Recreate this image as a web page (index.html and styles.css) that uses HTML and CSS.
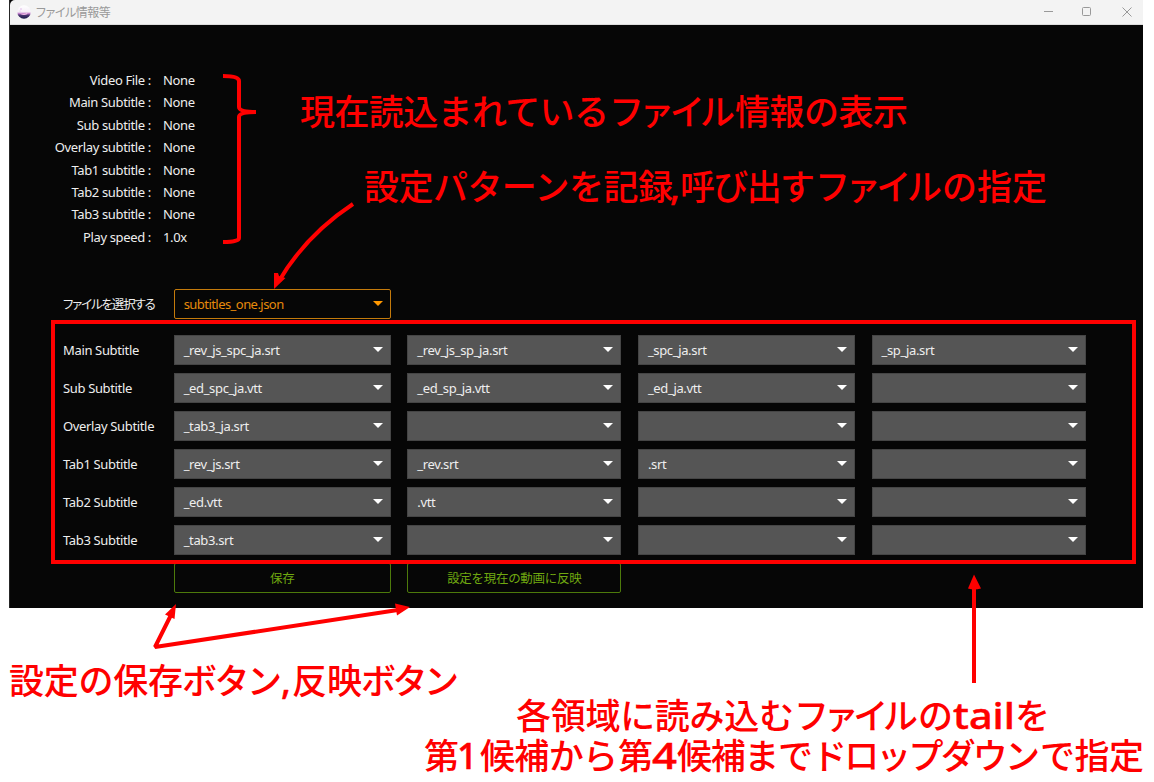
FILE: index.html
```
<!DOCTYPE html>
<html lang="ja">
<head>
<meta charset="utf-8">
<title>ファイル情報等</title>
<link rel="stylesheet" href="styles.css">
</head>
<body>
<main class="window">
  <header class="titlebar">
    <svg class="app-icon" width="14" height="14" viewBox="0 0 14 14">
      <defs><linearGradient id="sky" x1="0" y1="0" x2="0" y2="1"><stop offset="0" stop-color="#fff"/><stop offset=".5" stop-color="#f6eff8"/><stop offset=".62" stop-color="#bd78c8"/><stop offset=".74" stop-color="#48346f"/><stop offset="1" stop-color="#171947"/></linearGradient></defs>
      <circle cx="7" cy="7" r="6.7" fill="url(#sky)"/>
      <path d="M3.3 8.2Q7 9.5 10.800 7.500L10 9.300Q7 10.500 4 9.300Z" fill="#f0bde5"/>
      <circle cx="4" cy="4" r=".7" fill="#dba9e6"/><circle cx="3" cy="6" r=".5" fill="#dba9e6"/>
    </svg>
    <span class="title">ファイル情報等</span>
    <svg class="controls" width="90" height="12" viewBox="0 0 90 12" fill="none" stroke="#999">
      <path d="M1 5.500h9"/><rect x="39.500" y="1.500" width="8" height="8" rx="1"/><path d="M79.500 1.500l9 9m0-9l-9 9"/>
    </svg>
  </header>
  <dl class="info">
    <dt>Video File :</dt><dd>None</dd>
    <dt>Main Subtitle :</dt><dd>None</dd>
    <dt>Sub subtitle :</dt><dd>None</dd>
    <dt>Overlay subtitle :</dt><dd>None</dd>
    <dt>Tab1 subtitle :</dt><dd>None</dd>
    <dt>Tab2 subtitle :</dt><dd>None</dd>
    <dt>Tab3 subtitle :</dt><dd>None</dd>
    <dt>Play speed :</dt><dd>1.0x</dd>
  </dl>
  <section class="picker">
    <span class="jp">ファイルを選択する</span><div class="select file">subtitles_one.json</div>
  </section>
  <section class="form">
    <span>Main Subtitle</span><div class="select">_rev_js_spc_ja.srt</div><div class="select">_rev_js_sp_ja.srt</div><div class="select">_spc_ja.srt</div><div class="select">_sp_ja.srt</div>
    <span>Sub Subtitle</span><div class="select">_ed_spc_ja.vtt</div><div class="select">_ed_sp_ja.vtt</div><div class="select">_ed_ja.vtt</div><div class="select"></div>
    <span>Overlay Subtitle</span><div class="select">_tab3_ja.srt</div><div class="select"></div><div class="select"></div><div class="select"></div>
    <span>Tab1 Subtitle</span><div class="select">_rev_js.srt</div><div class="select">_rev.srt</div><div class="select">.srt</div><div class="select"></div>
    <span>Tab2 Subtitle</span><div class="select">_ed.vtt</div><div class="select">.vtt</div><div class="select"></div><div class="select"></div>
    <span>Tab3 Subtitle</span><div class="select">_tab3.srt</div><div class="select"></div><div class="select"></div><div class="select"></div>
    <span></span><button>保存</button><button>設定を現在の動画に反映</button>
  </section>
</main>
<svg class="notes" width="1154" height="782" viewBox="0 0 1154 782">
  <g fill="none" stroke="#f00" stroke-width="4">
    <rect x="53" y="322" width="1081" height="240"/>
    <path d="M223 76Q239 76 239 81V107Q239 112 256 112Q239 112 239 117V238Q239 242 223 242"/>
    <path d="M353 204Q306 235 279 281"/>
    <path d="M172 613L155 647L401 609.500" stroke-linejoin="bevel"/>
    <path d="M974 683V587"/>
  </g>
  <g fill="#f00">
    <path d="M274 289V273H278L279 276L285.500 278Z"/>
    <path d="M176 604L165 614.500L174.500 619Z"/>
    <path d="M410 607L395 603.500L397 615.500Z"/>
    <path d="M974 574.500L968 588.500Q974 590.500 981 588.500Z"/>
  </g>
  <g class="captions">
    <text y="125"><tspan x="300" textLength="309">現在読込まれている</tspan><tspan x="609" textLength="126">ファイル</tspan><tspan x="735" textLength="173">情報の表示</tspan></text>
    <text y="200"><tspan x="364" textLength="309">設定パターンを記録</tspan><tspan x="670" class="latin">,</tspan><tspan x="680" textLength="135">呼び出す</tspan><tspan x="815" textLength="127">ファイル</tspan><tspan x="942" textLength="105">の指定</tspan></text>
    <text y="694"><tspan x="9" textLength="174">設定の保存</tspan><tspan x="182" textLength="100">ボタン</tspan><tspan x="281" class="latin">,</tspan><tspan x="292" textLength="70">反映</tspan><tspan x="361" textLength="98">ボタン</tspan></text>
    <text y="729"><tspan x="516" textLength="278">各領域に読み込む</tspan><tspan x="794" textLength="124">ファイル</tspan><tspan x="918">の</tspan><tspan x="953" class="latin" textLength="62" lengthAdjust="spacingAndGlyphs">tail</tspan><tspan x="1015">を</tspan></text>
    <text y="769"><tspan x="424">第</tspan><tspan x="457" class="latin">1</tspan><tspan x="480" textLength="138">候補から</tspan><tspan x="618">第</tspan><tspan x="652" class="latin" textLength="25" lengthAdjust="spacingAndGlyphs">4</tspan><tspan x="677" textLength="136">候補まで</tspan><tspan x="812" textLength="228">ドロップダウン</tspan><tspan x="1040" textLength="104">で指定</tspan></text>
  </g>
</svg>
</body>
</html>
```
FILE: styles.css
```
* { box-sizing: border-box; }
body { margin: 0; width: 1154px; height: 782px; overflow: hidden; background: #fff; font: 13px/22px "Noto Sans", "Noto Sans CJK JP", sans-serif; letter-spacing: -.35px; color: #eee; }
.window { width: 1134px; height: 608px; margin-left: 9px; background: #060606; border-left: 1px solid #262626; }
.titlebar { height: 25px; display: flex; align-items: center; padding: 0 10px 1px 7px; background: #f3f3f3; border-bottom: 1px solid #ddd; border-top-left-radius: 5px; color: #999; }
.title { margin-left: 5px; font-family: "Noto Sans CJK JP", sans-serif; font-size: 12px; line-height: 20px; letter-spacing: -.45px; font-feature-settings: "palt"; }
.controls { margin-left: auto; }
.info { margin: 44px 0 0; display: grid; grid-template-columns: 141px 1fr; column-gap: 12px; grid-auto-rows: 22.400px; }
.info dt { text-align: right; }
.info dd { margin: 0; }
.picker, .form { display: grid; grid-template-columns: 94px 217px 214px 217px 214px; column-gap: 16.650px; margin-left: 53px; align-items: center; white-space: nowrap; }
.picker { margin-top: 40.800px; }
.form { margin-top: 16px; grid-auto-rows: 30px; row-gap: 8px; }
.jp { font-family: "Noto Sans CJK JP", sans-serif; font-size: 12.500px; letter-spacing: -1.200px; font-feature-settings: "palt"; }
.select { height: 30px; padding: 0 7px 0 9px; display: flex; align-items: center; background: #555; border: 1px solid #454545; }
.select::after { content: ""; margin: -1px 0 0 auto; border: 5px solid transparent; border-top-color: #fff; border-bottom: 0; }
.file { background: transparent; border-color: #c47a0b; border-radius: 2px; color: #e58a0b; letter-spacing: -.550px; }
.file::after { border-top-color: #ff9800; }
button { height: 30px; padding: 0; background: transparent; border: 1px solid #4d7a0b; border-radius: 2px; color: #70a810; font: 12.500px "Noto Sans CJK JP", sans-serif; letter-spacing: -.3px; }
.notes { position: absolute; left: 0; top: 0; }
.captions { fill: #f00; font: 500 35px "Noto Sans CJK JP", sans-serif; letter-spacing: 0; }
.latin { font-family: "Noto Sans", sans-serif; font-weight: 500; font-size: 36px; stroke: #f00; stroke-width: .5px; }
```
